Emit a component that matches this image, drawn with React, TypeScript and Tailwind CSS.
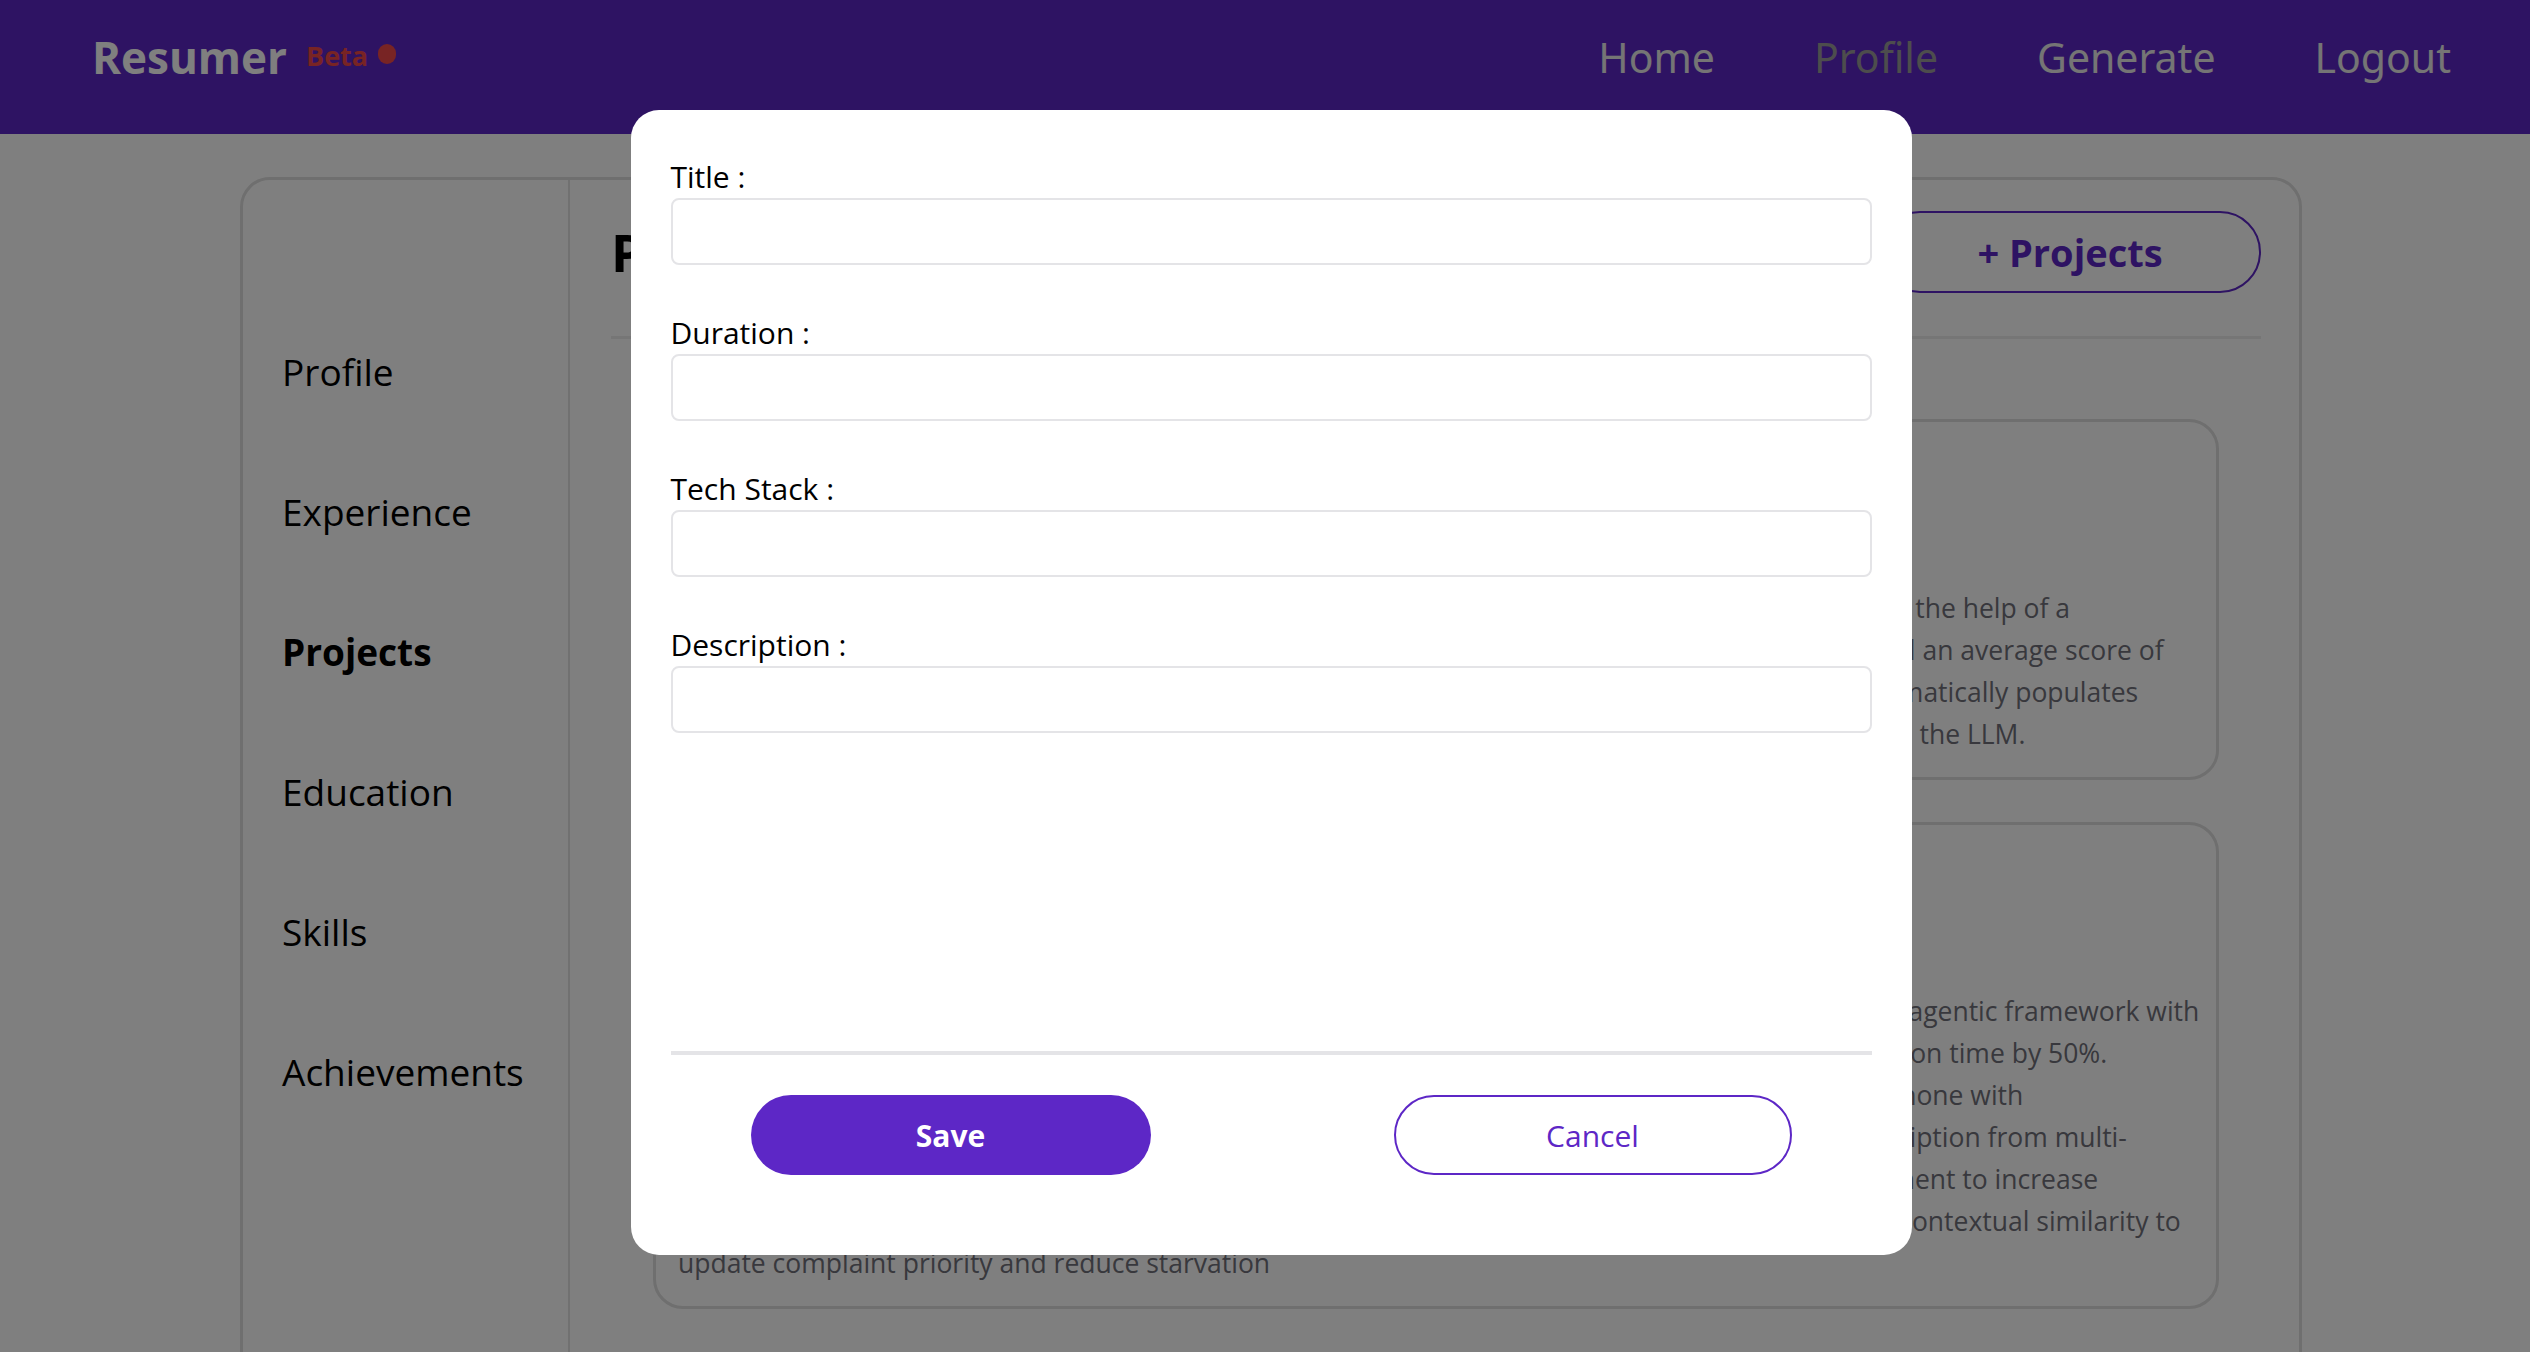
import { useState } from "react";

const sidebarItems = ["Profile", "Experience", "Projects", "Education", "Skills", "Achievements"];

const projects = [
  {
    title: "Resumer",
    meta: "React, FastAPI, PostgreSQL, LangChain | Jan 2024 - Apr 2024",
    lines: [
      "Developed a web application which generates tailored, ATS-friendly resumes from user profiles with the help of a",
      "large language model, optimizing keyword coverage for each specific job description, and it achieved an average score of",
      "92% on ATS checkers across all tested postings. Built a profile editor that stores all entries and automatically populates",
      "resume sections such as experience, projects, skills and achievements before sending the prompt to the LLM.",
    ],
  },
  {
    title: "Complaint Management System",
    meta: "Python, Django, Whisper, LangGraph | Aug 2023 - Dec 2023",
    lines: [
      "Built a complaint management platform for campus services that routes and solves tickets using an agentic framework with",
      "specialised agents for triage, assignment and follow-up, that reduced the average complaint resolution time by 50%.",
      "Implemented a voice complaint feature that lets students record issues directly from their mobile phone with",
      "automatic speech recognition and noise filtering, generating a clean and highly accurate text transcription from multi-",
      "lingual audio inputs. Added a sentiment analysis and duplicate complaint detection pipeline component to increase",
      "the accuracy of grouping related complaints, and utilised the urgency of each complaint along with contextual similarity to",
      "update complaint priority and reduce starvation",
    ],
  },
];

const fields = ["Title", "Duration", "Tech Stack", "Description"];

export default function App() {
  const [form, setForm] = useState<Record<string, string>>({});

  return (
    <div className="min-h-screen bg-white relative font-['Open_Sans',sans-serif] text-black">
      <nav className="h-[134px] bg-[#5d27c6] flex items-center justify-between pl-[92px] pr-[79px] pb-5">
        <div className="flex items-center">
          <span className="text-[44px] font-bold text-white leading-none">Resumer</span>
          <span className="relative -top-[2px] ml-[19px] text-[27px] font-bold text-[#f04848] leading-none">Beta</span>
          <span className="relative -top-[3px] ml-[10px] w-[18px] h-5 rounded-full bg-[#f04848]" />
        </div>
        <div className="flex items-center gap-[99px] font-['Noto_Sans',sans-serif] text-[41px] leading-none">
          <a className="text-[#eaeaea]">Home</a>
          <a className="text-[#9a9a9a]">Profile</a>
          <a className="text-[#eaeaea]">Generate</a>
          <a className="text-[#eaeaea]">Logout</a>
        </div>
      </nav>

      <div className="ml-[240px] mr-[228px] mt-[43px]">
        <div className="flex border-[3px] border-[#dedede] rounded-[30px] h-[1300px] overflow-hidden">
          <aside className="w-[327px] shrink-0 border-r-2 border-[#e2e2e2] pl-[39px] pt-[167px] flex flex-col gap-[90px]">
            {sidebarItems.map((item) => (
              <div
                key={item}
                className={`text-[37px] leading-[50px] ${item === "Projects" ? "font-bold" : ""}`}
              >
                {item}
              </div>
            ))}
          </aside>

          <main className="flex-1 min-w-0 pl-[41px] pr-[38px] pt-[31px]">
            <div className="flex items-center justify-between h-[82px]">
              <h1 className="text-[52px] font-bold">Projects</h1>
              <button className="w-[382px] h-[82px] rounded-full border-2 border-[#5d27c6] text-[#5d27c6] text-[38px] font-bold">
                + Projects
              </button>
            </div>
            <div className="mt-[43px] h-[3px] bg-[#ececec]" />

            <div className="mt-[80px] mx-[42px] flex flex-col gap-[42px]">
              {projects.map((p) => (
                <div key={p.title} className="border-[3px] border-[#dedede] rounded-[30px] px-[22px] pt-6 pb-[22px]">
                  <div className="text-[34px] font-bold leading-[56px]">{p.title}</div>
                  <div className="mt-2 text-[26.5px] leading-[42px] text-[#52525b]">{p.meta}</div>
                  <div className="mt-[35px] text-[26.5px] leading-[42px] text-[#71717a] whitespace-nowrap">
                    {p.lines.map((l, i) => (
                      <span key={i} className="block">
                        {l}
                      </span>
                    ))}
                  </div>
                </div>
              ))}
            </div>
          </main>
        </div>
      </div>

      <div className="fixed inset-0 bg-black/50 z-10" />

      <div className="fixed inset-0 z-20 flex justify-center items-start pt-[110px] pl-3">
        <div className="w-[1281px] h-[1145px] bg-white rounded-[28px] px-10 pt-[47px] pb-20 flex flex-col">
          <div className="flex flex-col gap-[48px]">
            {fields.map((f) => (
              <div key={f}>
                <label className="block text-[30px] leading-[40px] text-black">{f} :</label>
                <input
                  value={form[f] ?? ""}
                  onChange={(e) => setForm({ ...form, [f]: e.target.value })}
                  className="mt-px block w-full h-[67px] border-2 border-[#e4e4e7] rounded-lg px-4 text-[28px] outline-none"
                />
              </div>
            ))}
          </div>

          <div className="mt-auto h-1 bg-[#e4e4e7]" />

          <div className="mt-10 flex justify-between px-20">
            <button className="w-[400px] h-20 rounded-full bg-[#5d27c6] text-white text-[30px] font-bold">
              Save
            </button>
            <button className="w-[398px] h-20 rounded-full border-2 border-[#5d27c6] text-[#5d27c6] text-[30px]">
              Cancel
            </button>
          </div>
        </div>
      </div>
    </div>
  );
}
